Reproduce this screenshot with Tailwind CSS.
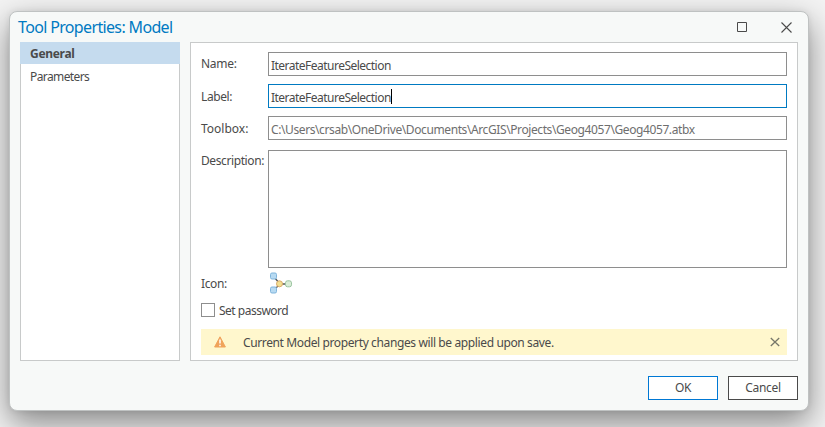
<!DOCTYPE html>
<html lang="en">
<head>
<meta charset="utf-8">
<title>Tool Properties: Model</title>
<script src="https://cdn.jsdelivr.net/npm/@tailwindcss/browser@4"></script>
</head>
<body class="h-[427px] w-[825px] overflow-hidden bg-[#f3f3f3] pl-[9px] pt-[11px] font-['Noto_Sans','Open_Sans',sans-serif] text-[12px] leading-4 tracking-[-0.4px] text-[#4a4a4a]">
<div class="flex h-[400px] w-[800px] flex-col rounded-lg border border-[#bfc2c2] bg-[#f7f9f8] shadow-[0_12px_32px_rgba(0,0,0,0.45),0_0_6px_rgba(0,0,0,0.08)]">
  <header class="flex h-[30px] shrink-0 items-center pl-2 pr-[16px]">
    <h1 class="grow text-[16px] leading-5 tracking-[-0.65px] text-[#007ac2]">Tool Properties: Model</h1>
    <svg class="mr-[33px] size-[11px]" viewBox="0 0 11 11" fill="none" stroke="#4a4a4a"><path d="M.5.5h9v9h-9z"/></svg>
    <svg class="size-[11px]" viewBox="0 0 11 11" fill="none" stroke="#4a4a4a" stroke-width="1.1"><path d="M.5.5l10 10M10.5.5l-10 10"/></svg>
  </header>
  <div class="flex h-[319px] gap-[10px] px-[10px]">
    <nav class="w-[160px] border border-[#c8caca] bg-white">
      <div class="-mx-px -mt-px h-[22px] bg-[#c5dbee] pl-[10px] pt-[4px] font-bold tracking-[-0.3px]">General</div>
      <div class="pl-[9px] pt-[5px] tracking-[-0.6px]">Parameters</div>
    </nav>
    <main class="flex w-[608px] flex-col border border-[#c8caca] bg-white px-[10px] pt-[9px]">
      <div class="mb-2 flex h-6"><span class="w-[67px] shrink-0 pt-1 tracking-[-0.3px]">Name:</span><div class="grow border border-[#8e8e8e] pl-[2px] pt-[5px] tracking-[-0.52px]">IterateFeatureSelection</div></div>
      <div class="mb-2 flex h-6"><span class="w-[67px] shrink-0 pt-[5px]">Label:</span><div class="flex grow border border-[#007ac2] pl-[2px] pt-1"><span class="pt-px tracking-[-0.52px]">IterateFeatureSelection</span><i class="h-[15px] w-px bg-black"></i></div></div>
      <div class="mb-[10px] flex h-6"><span class="w-[67px] shrink-0 pt-[5px] tracking-[0px]">Toolbox:</span><div class="grow border border-[#8e8e8e] pl-[2px] pt-[5px] text-[#6e6e6e]">C:\Users\crsab\OneDrive\Documents\ArcGIS\Projects\Geog4057\Geog4057.atbx</div></div>
      <div class="flex h-[118px]"><span class="w-[67px] shrink-0 pt-[3px]">Description:</span><div class="grow border border-[#8e8e8e]"></div></div>
      <div class="flex h-[35px] pt-[3px]"><span class="w-[67px] pt-[5px]">Icon:</span>
        <svg class="ml-[1px] mt-[1px] h-[24px] w-[26px]" viewBox="0 0 26 24"><path d="M5 5l6 7-6 6M11 12h9" fill="none" stroke="#555" stroke-width="1.3"/><g fill="#b7daf2" stroke="#80b5dc"><rect x="1.5" y="1" width="6" height="6" rx="1.5"/><rect x="1.5" y="15" width="6" height="6" rx="1.5"/></g><circle cx="10.5" cy="11.8" r="3" fill="#f2df91" stroke="#d9ab68"/><rect x="16.5" y="8.8" width="6" height="6" rx="2" fill="#d9edd7" stroke="#9ac4a0"/></svg>
      </div>
      <div class="flex h-[26px]"><span class="size-[14px] border border-[#8e8e8e]"></span><span class="ml-1 tracking-[-0.5px]">Set password</span></div>
      <div class="flex h-[26px] items-center bg-[#fff7cd] pl-[13px] pr-[7px]">
        <svg class="mr-[17px] h-[12px] w-[12px]" viewBox="0 0 12 12"><path d="M6 .8L11.4 11H.6z" fill="#f0a35b" stroke="#f0a35b" stroke-linejoin="round"/><path d="M6 3.5v4M6 8.7v1.5" stroke="#fff" stroke-width="1.5"/></svg>
        <span class="grow pt-[2px] tracking-[-0.38px]">Current Model property changes will be applied upon save.</span>
        <svg class="size-[10px]" viewBox="0 0 10 10" stroke="#77776a" stroke-width="1.3"><path d="M.8 1l8.4 8M9.2 1L.8 9"/></svg>
      </div>
    </main>
  </div>
  <footer class="flex justify-end gap-[10px] pr-[10px] pt-[15px] tracking-[-0.3px]">
    <button class="h-6 w-[70px] border border-[#0078d4] bg-white">OK</button>
    <button class="h-6 w-[70px] border border-[#4a4a4a] bg-white">Cancel</button>
  </footer>
</div>
</body>
</html>
